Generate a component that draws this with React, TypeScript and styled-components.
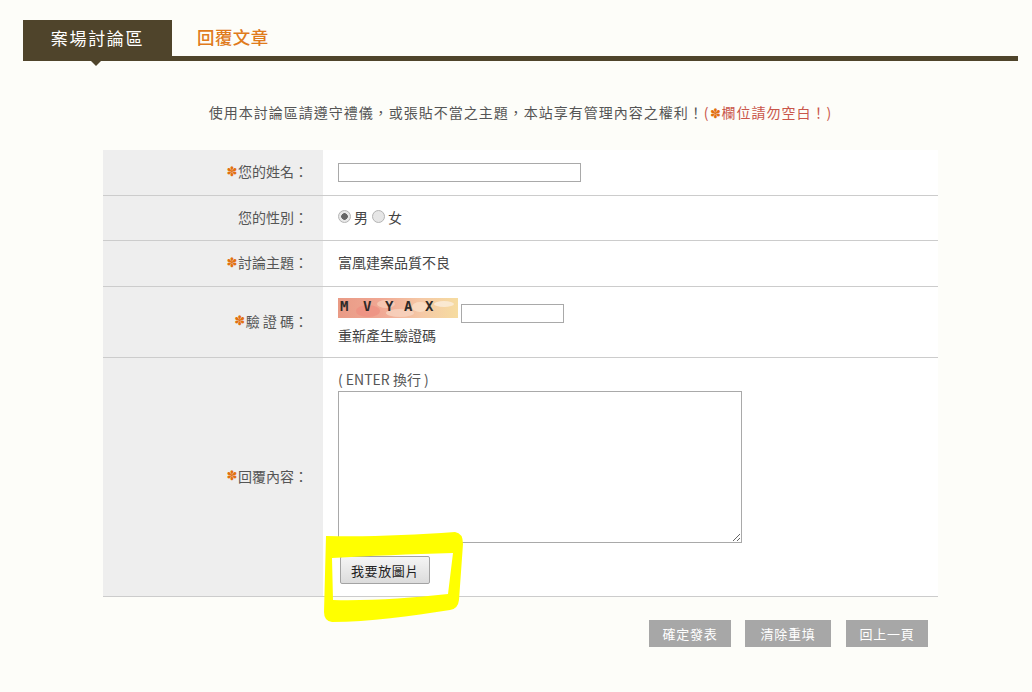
import styled, { createGlobalStyle } from 'styled-components';

const GlobalStyle = createGlobalStyle`
  html, body {
    margin: 0;
    padding: 0;
    background: #fdfdf9;
  }

  body {
    font-family: "Noto Sans CJK TC", "Liberation Sans", sans-serif;
    font-size: 14px;
    color: #555;
  }
`;

/* Styles */
const Page = styled.div`
  position: relative;
  width: 1032px;
  height: 692px;
  overflow: hidden;
  padding-top: 20px;
  box-sizing: border-box;
`;

const TabBar = styled.div`
  display: flex;
  margin: 0 14px 0 23px;
  height: 41px;
  border-bottom: 5px solid #4f442b;
  box-sizing: border-box;
`;

const ActiveTab = styled.div`
  position: relative;
  width: 149px;
  height: 41px;
  background: #4f442b;
  color: #fff;
  font-size: 17px;
  letter-spacing: 1.7px;
  line-height: 35px;
  text-align: center;

  &::after {
    content: '';
    position: absolute;
    left: 68px;
    top: 41px;
    border-left: 5px solid transparent;
    border-right: 5px solid transparent;
    border-top: 5px solid #4f442b;
  }
`;

const Tab = styled.div`
  margin-left: 25px;
  color: #e07b1c;
  font-size: 17.5px;
  font-weight: 500;
  letter-spacing: 0.4px;
  line-height: 33px;
`;

const Notice = styled.p`
  margin: 41px 0 28px;
  height: 20px;
  padding-left: 9px;
  font-size: 14px;
  letter-spacing: 1px;
  line-height: 20px;
  text-align: center;
  color: #555;
`;

const Warn = styled.span`
  color: #c9564a;
`;

const Star = styled.span`
  display: inline-block;
  width: 12px;
  font-family: "DejaVu Sans", sans-serif;
  font-size: 13px;
  font-weight: 700;
  letter-spacing: 0;
  text-align: center;
  color: #e2700f;
`;

const FormTable = styled.div`
  width: 835px;
  margin-left: 103px;
  background: #fff;
`;

const Row = styled.div<{ $height: number }>`
  display: grid;
  grid-template-columns: 220px 1fr;
  height: ${(p) => p.$height}px;
  border-bottom: 1px solid #ccc;
  box-sizing: border-box;
`;

const Label = styled.div`
  display: flex;
  align-items: center;
  justify-content: flex-end;
  padding: 0 15px 3px 0;
  background: #eee;
  color: #555;
`;

const Value = styled.div`
  display: flex;
  align-items: center;
  padding-left: 15px;
  color: #444;
`;

const TextValue = styled(Value)`
  padding-bottom: 3px;
`;

const StackValue = styled(Value)`
  flex-direction: column;
  align-items: flex-start;
`;

const TextInput = styled.input<{ $width: number }>`
  width: ${(p) => p.$width}px;
  height: 19px;
  padding: 0;
  border: 1px solid #a9a9a9;
  background: #fff;
  box-sizing: border-box;
`;

const Radio = styled.input`
  appearance: none;
  width: 13px;
  height: 13px;
  margin: 0 3px 1px 0;
  border: 1px solid #b4b4b4;
  border-radius: 50%;
  background: #e6e6e6;
  box-sizing: border-box;

  &:checked {
    background: radial-gradient(circle, #666 0 3px, #e8e8e8 3.6px);
  }
`;

const RadioText = styled.span`
  margin-right: 4px;
`;

const CaptchaRow = styled.div`
  display: flex;
  align-items: flex-start;
  height: 25px;
  margin-top: 11px;
  gap: 3px;
`;

const CaptchaInput = styled(TextInput)`
  margin-top: 6px;
`;

const CaptchaRefresh = styled.div`
  margin-top: 1px;
  line-height: 22px;
  color: #444;
`;

const Hint = styled.div`
  margin-top: 11px;
  height: 22px;
  line-height: 20px;
  color: #555;
`;

const Message = styled.textarea`
  display: block;
  width: 404px;
  height: 152px;
  padding: 2px;
  border: 1px solid #a9a9a9;
  background: #fff;
  box-sizing: border-box;
`;

const UploadButton = styled.button`
  width: 90px;
  height: 28px;
  margin: 13px 0 0 2px;
  padding: 0;
  border: 1px solid #a3a3a3;
  border-radius: 2px;
  background: linear-gradient(#f5f5f5, #dcdcdc);
  font-family: inherit;
  font-size: 13px;
  letter-spacing: 0.6px;
  color: #222;
`;

const Actions = styled.div`
  display: flex;
  justify-content: flex-end;
  gap: 14px;
  width: 825px;
  margin: 23px 0 0 103px;
`;

const ActionButton = styled.button<{ $width: number }>`
  width: ${(p) => p.$width}px;
  height: 27px;
  padding: 0;
  border: 0;
  background: #a7a7a7;
  color: #fff;
  font-family: inherit;
  font-size: 13px;
  letter-spacing: 0.7px;

  &:last-child {
    margin-left: 1px;
  }
`;

const Marker = styled.svg`
  position: absolute;
  left: 0;
  top: 0;
  pointer-events: none;
`;

function Captcha() {
  return (
    <svg width="120" height="20" viewBox="0 0 120 20">
      <defs>
        <linearGradient id="captcha-bg" x1="0" x2="1" y1="0" y2="0">
          <stop offset="0" stopColor="#e99b86" />
          <stop offset="0.35" stopColor="#f0a793" />
          <stop offset="0.7" stopColor="#f5c9a6" />
          <stop offset="1" stopColor="#f6dca0" />
        </linearGradient>
      </defs>
      <rect width="120" height="20" fill="url(#captcha-bg)" />
      <ellipse cx="30" cy="13" rx="12" ry="6" fill="#ee8f80" opacity="0.7" />
      <ellipse cx="48" cy="6" rx="9" ry="4" fill="#f7cdb8" opacity="0.8" />
      <ellipse cx="62" cy="15" rx="14" ry="4" fill="#f8d4c0" opacity="0.8" />
      <ellipse cx="82" cy="9" rx="8" ry="5" fill="#fae0c8" opacity="0.8" />
      <ellipse cx="106" cy="6" rx="10" ry="3" fill="#fbeedd" opacity="0.8" />
      <g fontFamily="'DejaVu Sans Mono', monospace" fontSize="14" fontWeight="700" fill="#2e2a28">
        <text x="2" y="13">M</text>
        <text x="25" y="13">V</text>
        <text x="47" y="13">Y</text>
        <text x="66" y="13">A</text>
        <text x="87" y="13">X</text>
      </g>
    </svg>
  );
}

function App() {
  return (
    <Page>
      <GlobalStyle />
      <TabBar>
        <ActiveTab>案場討論區</ActiveTab>
        <Tab>回覆文章</Tab>
      </TabBar>

      <Notice>
        使用本討論區請遵守禮儀，或張貼不當之主題，本站享有管理內容之權利！
        <Warn>
          (<Star>✽</Star>欄位請勿空白！)
        </Warn>
      </Notice>

      <FormTable>
        <Row $height={46}>
          <Label>
            <Star>✽</Star>您的姓名：
          </Label>
          <Value>
            <TextInput $width={243} type="text" />
          </Value>
        </Row>
        <Row $height={45}>
          <Label>您的性別：</Label>
          <TextValue>
            <Radio type="radio" name="gender" defaultChecked />
            <RadioText>男</RadioText>
            <Radio type="radio" name="gender" />
            <RadioText>女</RadioText>
          </TextValue>
        </Row>
        <Row $height={46}>
          <Label>
            <Star>✽</Star>討論主題：
          </Label>
          <TextValue>富凰建案品質不良</TextValue>
        </Row>
        <Row $height={71}>
          <Label>
            <Star>✽</Star>驗 證 碼：
          </Label>
          <StackValue>
            <CaptchaRow>
              <Captcha />
              <CaptchaInput $width={103} type="text" />
            </CaptchaRow>
            <CaptchaRefresh>重新產生驗證碼</CaptchaRefresh>
          </StackValue>
        </Row>
        <Row $height={239}>
          <Label>
            <Star>✽</Star>回覆內容：
          </Label>
          <StackValue>
            <Hint>( ENTER 換行 )</Hint>
            <Message />
            <UploadButton type="button">我要放圖片</UploadButton>
          </StackValue>
        </Row>
      </FormTable>

      <Actions>
        <ActionButton $width={82} type="button">確定發表</ActionButton>
        <ActionButton $width={86} type="button">清除重填</ActionButton>
        <ActionButton $width={82} type="button">回上一頁</ActionButton>
      </Actions>

      <Marker width="1032" height="692" viewBox="0 0 1032 692">
        <path
          fill="#ffff00"
          fillRule="evenodd"
          d="M326 536 C370 537 410 535 455 532 Q463 533 463 544 L459 600 Q458 609 450 610 C410 616 370 622 332 622 Q324 621 324 612 Z M332 558 L333 600 C370 601 410 598 448 594 L453 553 C410 554 370 556 332 558 Z"
        />
      </Marker>
    </Page>
  );
}

export default App;
